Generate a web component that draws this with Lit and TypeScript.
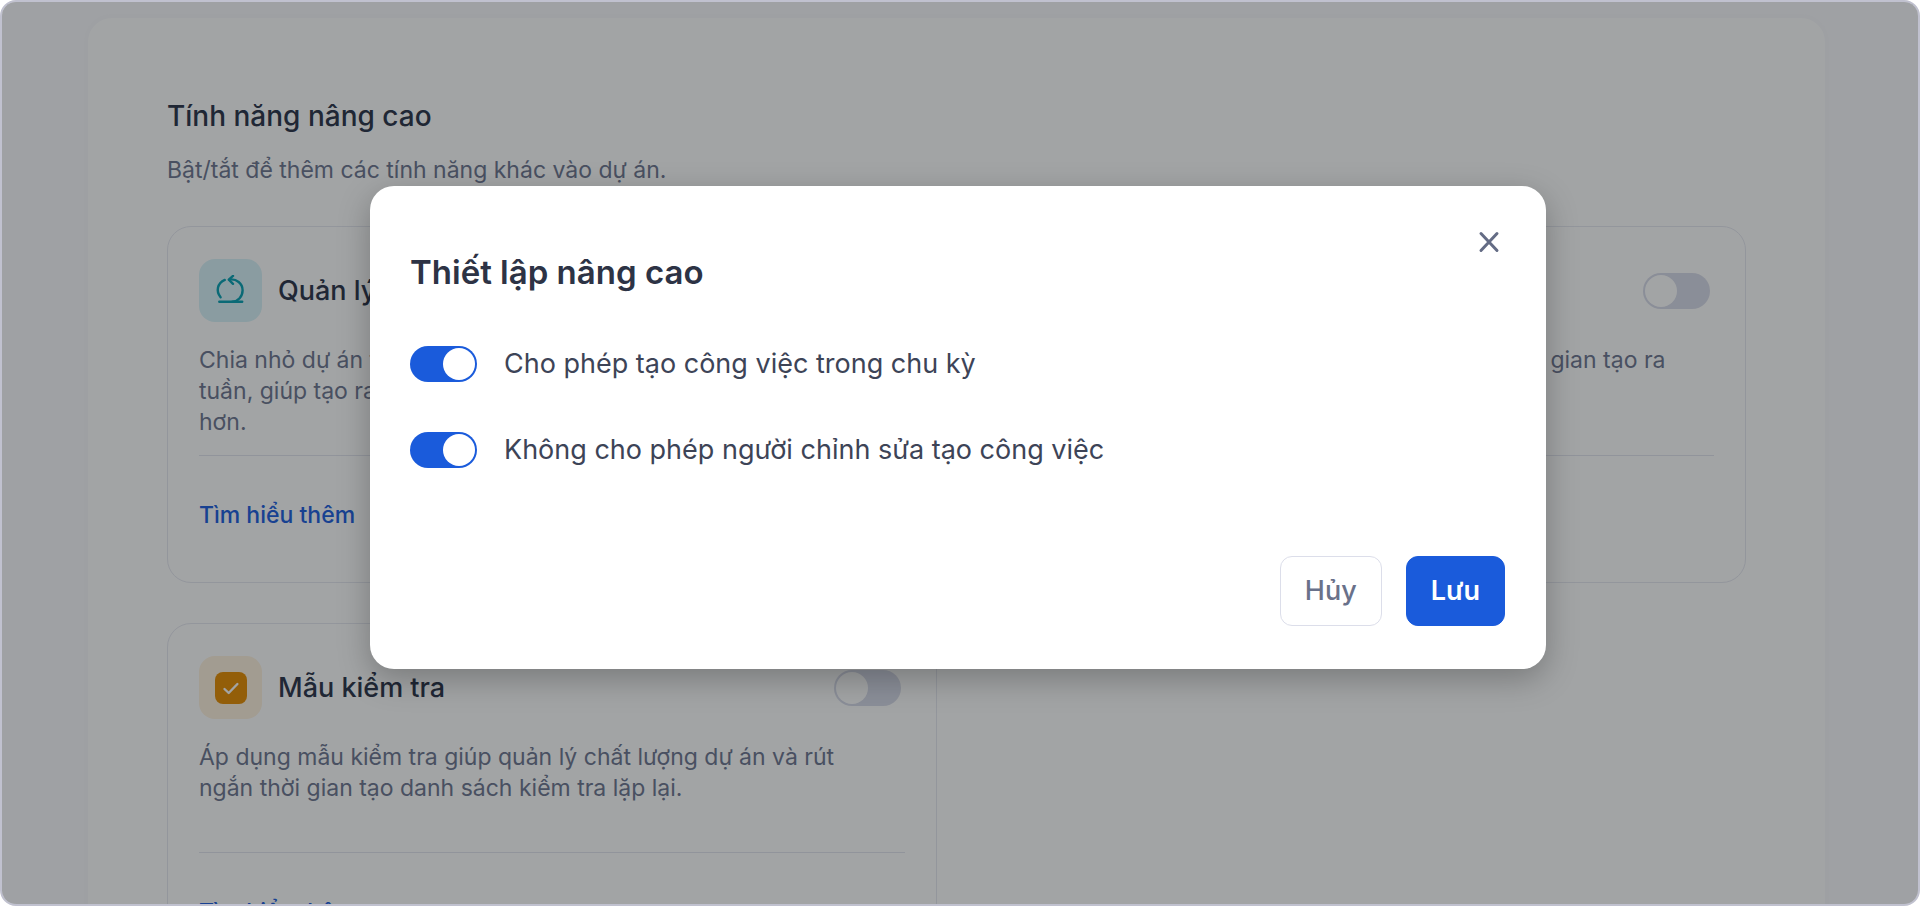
import { LitElement, html, css, svg } from "lit";
import { customElement, property, state } from "lit/decorators.js";

const cycleIcon = svg`
  <svg viewBox="0 0 32 32" width="32" height="32" fill="none" stroke="#0fa3b5" stroke-width="2.4" stroke-linecap="round" stroke-linejoin="round" aria-hidden="true">
    <path d="M5.6 22.3C0.6 16.3 2.3 8.2 9.8 4.9" />
    <path d="M14.2 4.6C21.6 3.4 27.6 8.8 27.6 15.2C27.6 21.6 23 26.4 17.5 26.7" />
    <path d="M4.3 26.7H27.2" />
    <path d="M18 0.9L13.8 4.6L18 8.8" />
  </svg>`;

const checkIcon = svg`
  <svg viewBox="0 0 32 32" width="32" height="32" fill="none" aria-hidden="true">
    <rect x="0" y="0" width="32" height="32" rx="8" fill="#e89009" />
    <path d="M9.5 17L13.7 21L22.4 12" stroke="#fff" stroke-width="2.4" stroke-linecap="round" stroke-linejoin="round" />
  </svg>`;

@customElement("toggle-switch")
class ToggleSwitch extends LitElement {
  @property() label = "";
  @property({ type: Boolean }) checked = false;
  @property({ type: Boolean }) hideLabel = false;

  static styles = css`
    :host {
      display: block;
    }
    .row {
      display: flex;
      align-items: center;
      gap: 27px;
      min-height: 36px;
      cursor: pointer;
    }
    .switch {
      appearance: none;
      box-sizing: border-box;
      flex: none;
      display: flex;
      width: 67px;
      height: 36px;
      margin: 0;
      padding: 2px;
      border-radius: 18px;
      background: #dadcea;
      cursor: pointer;
    }
    .switch::before {
      content: "";
      width: 32px;
      height: 32px;
      border-radius: 50%;
      background: #fff;
    }
    .switch:checked {
      background: #1a5bdb;
      justify-content: flex-end;
    }
    .text {
      font-size: 27px;
      line-height: 40px;
      color: #3d4457;
    }
  `;

  render() {
    return html`<label class="row">
      <input
        class="switch"
        type="checkbox"
        role="switch"
        aria-label=${this.label}
        .checked=${this.checked}
        @change=${(e: Event) => (this.checked = (e.target as HTMLInputElement).checked)}
      />
      ${this.hideLabel ? null : html`<span class="text">${this.label}</span>`}
    </label>`;
  }
}

@customElement("feature-card")
class FeatureCard extends LitElement {
  @property() heading = "";
  @property() description = "";
  @property() tone = "";
  @property({ attribute: false }) icon: unknown = null;

  static styles = css`
    :host {
      display: block;
    }
    .card {
      box-sizing: border-box;
      height: 100%;
      padding: 32px 31px 51px;
      border: 1px solid #e8e9f1;
      border-radius: 24px;
    }
    .head {
      display: flex;
      align-items: center;
      gap: 16px;
      padding-right: 4px;
    }
    .icon {
      display: grid;
      place-items: center;
      width: 63px;
      height: 63px;
      border-radius: 16px;
    }
    .icon.teal {
      background: #daf3f9;
    }
    .icon.amber {
      background: #fff2df;
    }
    .title {
      flex: 1;
      margin: 0;
      font-size: 27px;
      font-weight: 500;
      line-height: 40px;
      color: #323a4f;
    }
    .desc {
      min-height: 93px;
      margin: 23px 0 17px;
      font-size: 23px;
      line-height: 31px;
      color: #727a94;
      white-space: pre-line;
    }
    .foot {
      padding-top: 43px;
      border-top: 1px solid #e4e6f0;
    }
    .link {
      display: inline-block;
      vertical-align: top;
      font-size: 23px;
      font-weight: 500;
      line-height: 32px;
      color: #2563e0;
      text-decoration: none;
    }
  `;

  render() {
    return html`<article class="card">
      <header class="head">
        <span class="icon ${this.tone}">${this.icon}</span>
        <h3 class="title">${this.heading}</h3>
        <toggle-switch hideLabel .label=${this.heading}></toggle-switch>
      </header>
      <p class="desc">${this.description}</p>
      <div class="foot"><a class="link" href="#">Tìm hiểu thêm</a></div>
    </article>`;
  }
}

@customElement("app-root")
class AppRoot extends LitElement {
  @state() private features = [
    {
      heading: "Quản lý chu kỳ",
      tone: "teal",
      icon: cycleIcon,
      description:
        "Chia nhỏ dự án thành các chu kỳ làm việc từ 1 đến 4\ntuần, giúp tạo ra kết quả nhanh và quản lý dễ dàng\nhơn.",
    },
    {
      heading: "Mẫu công việc",
      tone: "amber",
      icon: checkIcon,
      description: "Áp dụng mẫu công việc có sẵn giúp tiết kiệm thời gian tạo ra\ncông việc.",
    },
    {
      heading: "Mẫu kiểm tra",
      tone: "amber",
      icon: checkIcon,
      description:
        "Áp dụng mẫu kiểm tra giúp quản lý chất lượng dự án và rút\nngắn thời gian tạo danh sách kiểm tra lặp lại.",
    },
  ];

  static styles = css`
    :host {
      display: block;
      font-family: Inter, "Noto Sans", sans-serif;
      background: #fff;
    }
    .frame {
      position: relative;
      box-sizing: border-box;
      height: 100vh;
      overflow: hidden;
      border: 2px solid #c0c1cf;
      border-radius: 16px;
      background: #fafafd;
    }
    .page {
      padding: 12px 89px 0 82px;
    }
    .panel {
      padding: 78px 79px;
      border: 4px solid #f9f9fc;
      border-radius: 28px;
      background: #fff;
    }
    .heading {
      margin: 0;
      font-size: 28px;
      font-weight: 500;
      line-height: 40px;
      color: #323a4f;
    }
    .sub {
      margin: 18px 0 40px;
      font-size: 23px;
      line-height: 32px;
      color: #727a94;
    }
    .cards {
      display: grid;
      grid-template-columns: 1fr 1fr;
      gap: 40px;
    }
    .overlay {
      position: absolute;
      inset: 0;
      display: flex;
      justify-content: center;
      align-items: flex-start;
      padding: 184px 4px 0 0;
      background: rgba(4, 7, 12, 0.37);
    }
    .dialog {
      box-sizing: border-box;
      width: 1176px;
      max-width: 100%;
      padding: 40px 41px 43px 40px;
      border-radius: 24px;
      background: #fff;
      box-shadow: 0 10px 32px rgba(0, 0, 0, 0.26);
    }
    .dialog-head {
      display: flex;
      justify-content: space-between;
      align-items: flex-start;
    }
    .dialog-title {
      margin: 22px 0 0;
      font-size: 33px;
      font-weight: 600;
      line-height: 48px;
      color: #2d3345;
    }
    .close {
      display: grid;
      place-items: center;
      width: 32px;
      height: 32px;
      padding: 0;
      border: 0;
      background: none;
      cursor: pointer;
    }
    .options {
      display: grid;
      gap: 46px;
      margin: 48px 0 86px;
    }
    .actions {
      display: flex;
      justify-content: flex-end;
      gap: 24px;
    }
    .btn {
      box-sizing: border-box;
      height: 70px;
      padding: 0 24px;
      border: 1px solid #dcdeea;
      border-radius: 12px;
      background: #fff;
      font-family: inherit;
      font-size: 27px;
      font-weight: 500;
      line-height: 40px;
      color: #69718a;
      cursor: pointer;
    }
    .btn.primary {
      border-color: #1a5bdb;
      background: #1a5bdb;
      font-weight: 600;
      color: #fff;
    }
  `;

  render() {
    return html`<div class="frame">
      <main class="page">
        <section class="panel">
          <h2 class="heading">Tính năng nâng cao</h2>
          <p class="sub">Bật/tắt để thêm các tính năng khác vào dự án.</p>
          <div class="cards">
            ${this.features.map(
              (f) => html`<feature-card
                .heading=${f.heading}
                .description=${f.description}
                .tone=${f.tone}
                .icon=${f.icon}
              ></feature-card>`
            )}
          </div>
        </section>
      </main>
      <div class="overlay">
        <section class="dialog" role="dialog" aria-modal="true" aria-labelledby="dialog-title">
          <header class="dialog-head">
            <h1 class="dialog-title" id="dialog-title">Thiết lập nâng cao</h1>
            <button class="close" type="button" aria-label="Đóng">
              <svg viewBox="0 0 32 32" width="32" height="32" fill="none" stroke="#646c85" stroke-width="3" stroke-linecap="round" aria-hidden="true">
                <path d="M8 7.5L24 24.5M24 7.5L8 24.5" />
              </svg>
            </button>
          </header>
          <div class="options">
            <toggle-switch checked label="Cho phép tạo công việc trong chu kỳ"></toggle-switch>
            <toggle-switch checked label="Không cho phép người chỉnh sửa tạo công việc"></toggle-switch>
          </div>
          <footer class="actions">
            <button class="btn" type="button">Hủy</button>
            <button class="btn primary" type="button">Lưu</button>
          </footer>
        </section>
      </div>
    </div>`;
  }
}
